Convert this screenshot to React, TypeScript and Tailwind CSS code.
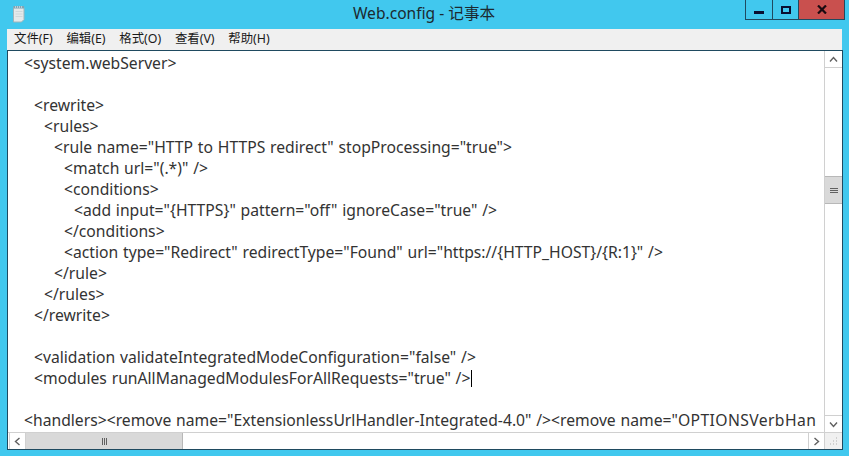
import React from 'react';

const lines: [number, string][] = [
  [0, '<system.webServer>'],
  [0, ''],
  [1, '<rewrite>'],
  [2, '<rules>'],
  [3, '<rule name="HTTP to HTTPS redirect" stopProcessing="true">'],
  [4, '<match url="(.*)" />'],
  [4, '<conditions>'],
  [5, '<add input="{HTTPS}" pattern="off" ignoreCase="true" />'],
  [4, '</conditions>'],
  [4, '<action type="Redirect" redirectType="Found" url="https://{HTTP_HOST}/{R:1}" />'],
  [3, '</rule>'],
  [2, '</rules>'],
  [1, '</rewrite>'],
  [0, ''],
  [1, '<validation validateIntegratedModeConfiguration="false" />'],
  [1, '<modules runAllManagedModulesForAllRequests="true" />'],
  [0, ''],
  [0, '<handlers><remove name="ExtensionlessUrlHandler-Integrated-4.0" /><remove name="'],
];

const indents = ['pl-0', 'pl-[10px]', 'pl-[20px]', 'pl-[30px]', 'pl-[40px]', 'pl-[50px]'];

const menus = ['文件(F)', '编辑(E)', '格式(O)', '查看(V)', '帮助(H)'];

function NotepadIcon() {
  return (
    <svg width="14" height="18" viewBox="0 0 14 18" className="block">
      <path d="M1.5 2.5h10.5v12l-2.5 2.5h-8z" fill="#e3e9ea" stroke="#9fb4ba" strokeWidth="1" />
      <path d="M1.5 1h10.5v2.5h-10.5z" fill="#7fa3b3" />
      <path d="M3 2h1M5 2h1M7 2h1M9 2h1" stroke="#f4f7f8" strokeWidth="1" />
      <path d="M3.5 6.5h7M3.5 9h7M3.5 11.5h7" stroke="#ced8db" strokeWidth="1" />
    </svg>
  );
}

function Arrow({ d }: { d: string }) {
  return (
    <svg width="9" height="9" viewBox="0 0 9 9" className="block">
      <path d={d} fill="none" stroke="#606060" strokeWidth="1.4" />
    </svg>
  );
}

export default function App() {
  return (
    <div className="w-[849px] h-[456px] bg-[#41c8ee] flex flex-col overflow-hidden font-['Noto_Sans','Noto_Sans_CJK_SC',sans-serif]">
      {/* Title bar */}
      <div className="h-[29px] flex relative shrink-0">
        <div className="pl-[12px] pt-[5px] w-[745px]">
          <NotepadIcon />
        </div>
        <div className="absolute left-0 right-0 top-[3px] pr-[1px] text-center text-[15.6px] leading-[20px] text-[#1c2a30]">
          Web.config - 记事本
        </div>
        <div className="flex h-[20px] border border-t-0 border-[#1f4a60] relative">
          <div className="w-[27px] border-r border-[#1f4a60] flex items-center justify-center pt-[5px]">
            <div className="w-[10px] h-[3px] bg-[#0a0f30]" />
          </div>
          <div className="w-[26px] border-r border-[#1f4a60] flex items-center justify-center">
            <div className="w-[10px] h-[8px] border-2 border-[#0a0f30]" />
          </div>
          <div className="w-[45px] bg-[#c9504e] flex items-center justify-center">
            <svg width="10" height="9" viewBox="0 0 10 9">
              <path d="M1 0.5l8 8M9 0.5l-8 8" stroke="#1a0a10" strokeWidth="2.2" />
            </svg>
          </div>
        </div>
      </div>

      {/* Menu bar */}
      <div className="mx-[7px] h-[21px] shrink-0 bg-[#f0f0f0] flex items-center pl-[7px] gap-[13.75px] text-[12.4px] text-[#1a1a1a]">
        {menus.map(m => (
          <span key={m}>{m}</span>
        ))}
      </div>

      {/* Edit area */}
      <div className="ml-[7px] mr-[6px] h-[400px] bg-white border border-[#1f4a60] flex flex-col">
        <div className="flex flex-1 min-h-0">
          <div className="flex-1 min-w-0 overflow-hidden pl-[16px] pt-[2px] text-[15.7px] leading-[21px] text-[#333] whitespace-pre [word-spacing:0.7px]">
            {lines.map(([level, text], i) => (
              <div key={i} className={`h-[21px] ${indents[level]}`}>
                {text}
                {i === 15 && <span className="inline-block w-px h-[17px] bg-black align-[-3px] ml-[1px]" />}
                {i === 17 && <span className="tracking-[0.4px]">OPTIONSVerbHan</span>}
              </div>
            ))}
          </div>
          {/* Vertical scrollbar */}
          <div className="w-[18px] shrink-0 bg-white border-l border-[#d0d0d0] flex flex-col">
            <div className="h-[17px] border-b border-[#d0d0d0] flex items-center justify-center">
              <Arrow d="M1 6.5l3.5-4 3.5 4" />
            </div>
            <div className="flex-1 pt-[108px]">
              <div className="h-[28px] bg-[#d9d9d9] border-y border-[#b8b8b8] flex flex-col items-center justify-center gap-px">
                <div className="w-[8px] h-px bg-[#606060]" />
                <div className="w-[8px] h-px bg-[#606060]" />
                <div className="w-[8px] h-px bg-[#606060]" />
              </div>
            </div>
            <div className="h-[17px] border-t border-[#d0d0d0] flex items-center justify-center">
              <Arrow d="M1 2.5l3.5 4 3.5-4" />
            </div>
          </div>
        </div>
        {/* Horizontal scrollbar */}
        <div className="h-[17px] shrink-0 flex border-t border-[#d0d0d0] bg-white">
          <div className="w-[17px] ml-[1px] border-x border-[#d0d0d0] flex items-center justify-center">
            <Arrow d="M6.5 1l-4 3.5 4 3.5" />
          </div>
          <div className="w-[157px] bg-[#d9d9d9] border-r border-[#b8b8b8] flex items-center justify-center gap-px">
            <div className="w-px h-[7px] bg-[#606060]" />
            <div className="w-px h-[7px] bg-[#606060]" />
            <div className="w-px h-[7px] bg-[#606060]" />
          </div>
          <div className="flex-1" />
          <div className="w-[17px] border-x border-[#d0d0d0] flex items-center justify-center">
            <Arrow d="M2.5 1l4 3.5-4 3.5" />
          </div>
          <div className="w-[17px] bg-[#f0f0f0] relative">
            {/* resize grip */}
            <svg width="17" height="16" viewBox="0 0 17 16" className="absolute inset-0">
              <path d="M11 5h1M8 8h1M11 8h1M5 11h1M8 11h1M11 11h1" stroke="#b0b0b0" strokeWidth="1" />
            </svg>
          </div>
        </div>
      </div>
    </div>
  );
}
